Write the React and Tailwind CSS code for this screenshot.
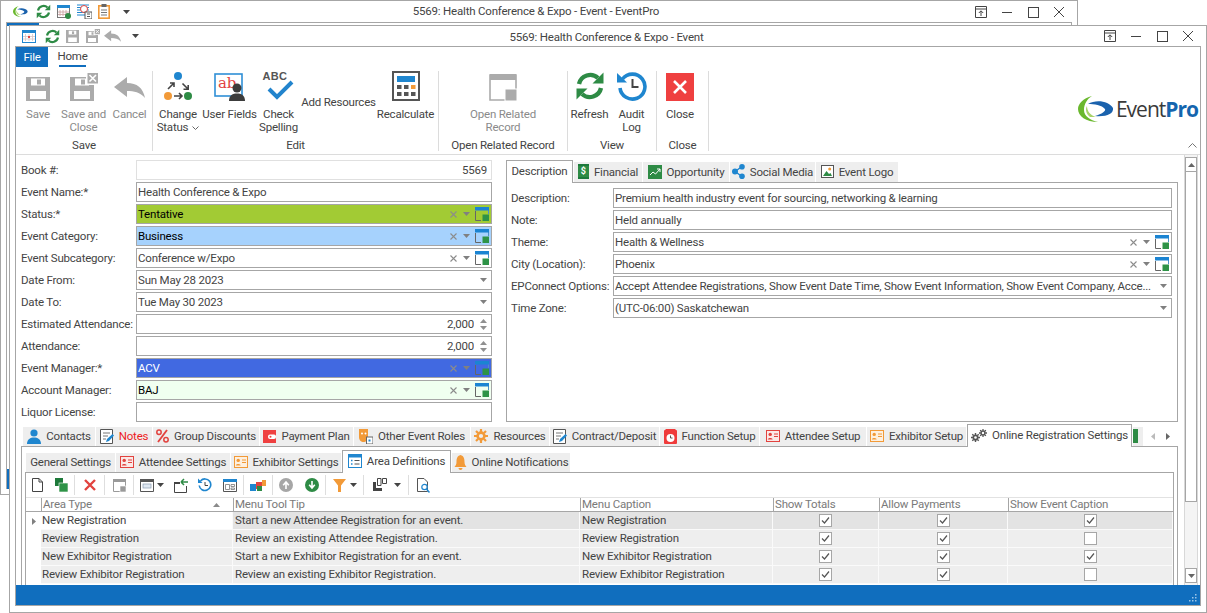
import React from "react";

function Svg({ w = 16, h = 16, vb, children, className = "" }) {
  return (
    <svg width={w} height={h} viewBox={vb || `0 0 ${w} ${h}`} className={`block shrink-0 ${className}`} fill="none">
      {children}
    </svg>
  );
}

const Caret = ({ c = "#7a7a7a", w = 7, up = false }) => (
  <Svg w={w} h={4} vb="0 0 7 4">
    <path d={up ? "M0 4 L3.5 0 L7 4Z" : "M0 0 L7 0 L3.5 4Z"} fill={c} />
  </Svg>
);

const RefreshIcon = ({ s = 16 }) => (
  <Svg w={s} h={s} vb="0 0 30 30">
    <path d="M4 13 A11.5 11.5 0 0 1 23 7" stroke="#2e8b45" strokeWidth="4.4" />
    <path d="M17.5 12.5 L28.5 12.5 L28.5 1.5Z" fill="#2e8b45" />
    <path d="M26 17 A11.5 11.5 0 0 1 7 23" stroke="#2e8b45" strokeWidth="4.4" />
    <path d="M12.5 17.5 L1.5 17.5 L1.5 28.5Z" fill="#2e8b45" />
  </Svg>
);

const Floppy = ({ x = false, c = "#ababab", w = 24, h = 24 }) => (
  <Svg w={w} h={h} vb={x ? "0 0 28 28" : "0 4 24 24"}>
    <path fillRule="evenodd" clipRule="evenodd" d="M0 4 H24 V28 H0Z M5 5.5 V12.5 H19 V5.5Z M4 18 V26 H20 V18Z" fill={c} />
    <rect x="11" y="6.5" width="4" height="5" fill={c} />
    {x && (
      <>
        <rect x="16" y="0" width="12" height="12" fill="#fff" />
        <rect x="17.5" y="0" width="10.5" height="10.5" fill={c} />
        <path d="M19.5 2 L26 8.5 M26 2 L19.5 8.5" stroke="#fff" strokeWidth="1.6" />
      </>
    )}
  </Svg>
);

const BackArrow = ({ w = 31, h = 21, c = "#ababab" }) => (
  <Svg w={w} h={h} vb="0 0 31 21">
    <path d="M0 10 L13 0 V6 C23 6 29 11 31 21 C26 15 20 14 13 14 V20Z" fill={c} />
  </Svg>
);

const RelatedIcon = ({ s = 14 }) => (
  <Svg w={s} h={s} vb="0 0 14 14">
    <path d="M13.5 .5 V7" stroke="#4d8fc6" />
    <rect x="0" y="0" width="14" height="3.5" fill="#1b84d2" />
    <path d="M.5 4 V13.5 H6" stroke="#666" strokeWidth="1" />
    <rect x="7.5" y="7.5" width="6.5" height="6.5" fill="#2e9347" />
  </Svg>
);

const SmallX = ({ c = "#8c8c8c" }) => (
  <Svg w={7} h={7}>
    <path d="M.5 .5 L6.5 6.5 M6.5 .5 L.5 6.5" stroke={c} strokeWidth="1.1" />
  </Svg>
);

const WinControls = () => (
  <div className="flex items-center gap-[12px] text-[#444]">
    <Svg w={14} h={14}>
      <path d="M1.5 1.5 H12.5 V12.5 H1.5Z M1.5 4 H12.5" stroke="#444" />
      <path d="M7 11 V6 M4.8 8 L7 5.8 L9.2 8" stroke="#444" />
    </Svg>
    <Svg w={14} h={14}><path d="M2 7.5 H12" stroke="#444" /></Svg>
    <Svg w={14} h={14}><rect x="2.5" y="2.5" width="10" height="10" stroke="#444" /></Svg>
    <Svg w={14} h={14}><path d="M2 2 L12 12 M12 2 L2 12" stroke="#444" /></Svg>
  </div>
);

const Swoosh = ({ w = 36, h = 26 }) => (
  <Svg w={w} h={h} vb="0 0 36 26">
    <path d="M14 0 C5 2 0 8 0 13 C0 20 8 26 20 26 C12 24 6 20 6 14 C6 8 9 3 14 0Z" fill="#6ab82e" />
    <path d="M10 8 C18 3 31 5 35 12 C36 18 28 21 17 20 C24 18 28 15 27 13 C24 9 16 8 10 8Z" fill="#1a62ad" />
    <path d="M12 21 C8 18 7 13 9 10 C9 15 12 19 18 21Z" fill="#a8d26a" />
  </Svg>
);

function RibbonBtn({ width, icon, label, muted }) {
  return (
    <div className={`flex flex-col items-center ${width} ${muted ? "text-[#8a8a8a]" : "text-[#444]"}`}>
      <div className="flex h-[30px] items-end justify-center">{icon}</div>
      <div className="mt-[7px] whitespace-nowrap text-center leading-[13px]">{label}</div>
    </div>
  );
}

function Group({ label, width, children }) {
  return (
    <div className={`flex h-[80px] flex-col border-r border-[#dcdcdc] ${width}`}>
      <div className="flex h-[69px] items-start">{children}</div>
      <div className="whitespace-nowrap text-center leading-[12px] text-[#444]">{label}</div>
    </div>
  );
}

const ChangeStatusIcon = () => (
  <Svg w={30} h={30}>
    <circle cx="15" cy="5" r="4" fill="#1f86cf" />
    <circle cx="5" cy="25" r="4" fill="#f29a38" />
    <circle cx="25" cy="25" r="4" fill="#2e8b45" />
    <path d="M5 18 L10.5 12.5 M7 12 H11 V16" stroke="#444" strokeWidth="1.6" />
    <path d="M25 18 L19.5 12.5 M20.5 18.2 H25.2 V14" stroke="#444" strokeWidth="1.6" />
    <path d="M11 25 H19 M16 22 L19 25 L16 28" stroke="#444" strokeWidth="1.6" />
  </Svg>
);

const UserFieldsIcon = () => (
  <Svg w={31} h={30}>
    <rect x="1" y="3" width="27" height="22" stroke="#2f8fd6" strokeWidth="1.6" fill="#fff" />
    <text x="4" y="17" fontSize="15" fontFamily="DejaVu Serif, serif" fill="#e2433f" fontWeight="500">ab</text>
    <circle cx="23" cy="17" r="4.5" fill="#3c3c3c" />
    <path d="M15 30 C15 24 19 22.5 23 22.5 C27 22.5 31 24 31 30Z" fill="#3c3c3c" />
  </Svg>
);

const SpellIcon = () => (
  <div className="relative flex h-[30px] w-[32px] flex-col">
    <span className="text-[11px] font-bold leading-[11px] tracking-[0.3px] text-[#555] [font-family:'Liberation_Sans',sans-serif]">ABC</span>
    <Svg w={30} h={20} className="absolute right-0 top-[9px]">
      <path d="M4 9 L12 17 L27 2" stroke="#2284cd" strokeWidth="4" />
    </Svg>
  </div>
);

const CalcIcon = () => (
  <Svg w={28} h={30}>
    <rect x="1" y="1" width="26" height="28" stroke="#555" strokeWidth="2" fill="#fff" />
    <rect x="5" y="5" width="18" height="6" fill="#1f86cf" />
    {[5, 12, 19].map((x) => <rect key={x} x={x} y="14" width="4.5" height="4" fill={x === 19 ? "#f29a38" : "#555"} />)}
    {[5, 12, 19].map((x) => <rect key={x} x={x} y="21" width="4.5" height="4" fill="#555" />)}
  </Svg>
);

const OpenRelatedIcon = () => (
  <Svg w={28} h={27}>
    <path d="M1 1 H27 V26 H1Z" stroke="#ababab" strokeWidth="1.6" fill="#fff" />
    <rect x="1" y="0" width="26" height="6" fill="#ababab" />
    <rect x="16" y="15" width="12" height="12" fill="#ababab" stroke="#fff" />
  </Svg>
);

const AuditIcon = () => (
  <Svg w={30} h={30}>
    <path d="M5.5 8 A12.5 12.5 0 1 1 3 17" stroke="#1f86cf" strokeWidth="3.6" />
    <path d="M0 2 V11.5 H10Z" fill="#1f86cf" />
    <path d="M15.5 8 V16 H21.5" stroke="#444" strokeWidth="2" />
  </Svg>
);

const CloseIcon = () => (
  <div className="flex h-[28px] w-[28px] items-center justify-center bg-[#ef4040]">
    <Svg w={16} h={16}>
      <path d="M2 2 L14 14 M14 2 L2 14" stroke="#fff" strokeWidth="2.6" />
    </Svg>
  </div>
);

function Field({ value, tone = "bg-white text-[#444]", border = "border-[#a6a6a6]", align = "", kind }) {
  return (
    <div className={`flex h-[20px] min-w-0 flex-1 items-center border pl-[1px] pr-[1px] ${border} ${tone}`}>
      <span className={`min-w-0 flex-1 truncate ${align}`}>{value}</span>
      {kind === "lookup" && (
        <div className="ml-[4px] flex items-center">
          <SmallX />
          <div className="ml-[6px]"><Caret c="#808080" /></div>
          <div className="ml-[5px] mr-[1px]"><RelatedIcon /></div>
        </div>
      )}
      {kind === "drop" && <div className="ml-[4px] mr-[3px]"><Caret c="#808080" /></div>}
      {kind === "spin" && (
        <div className="ml-[6px] mr-[3px] flex flex-col gap-[3px]">
          <Caret c="#909090" up />
          <Caret c="#909090" />
        </div>
      )}
    </div>
  );
}

function Row({ label, labelW = "w-[115px]", ...rest }) {
  return (
    <div className="flex h-[20px] items-center">
      <div className={`shrink-0 whitespace-nowrap text-[#444] ${labelW}`}>{label}</div>
      <Field {...rest} />
    </div>
  );
}

function Tab({ width, icon, label, active, red, h = "h-[19px]" }) {
  if (active) {
    return (
      <div className={`relative z-10 -mb-px flex h-[23px] shrink-0 items-center justify-center gap-[5px] border border-b-0 border-[#a6a6a6] bg-white pb-[2px] text-[#444] ${width}`}>
        {icon}
        <span className="whitespace-nowrap">{label}</span>
      </div>
    );
  }
  return (
    <div className={`flex shrink-0 items-center justify-center gap-[5px] bg-[#eeeeee] pb-px ${h} ${width} ${red ? "text-[#ed1c24]" : "text-[#444]"}`}>
      {icon}
      <span className="whitespace-nowrap">{label}</span>
    </div>
  );
}

/* tab icons */
const DocPen = () => (
  <Svg w={14} h={15}>
    <path d="M.5 .5 H12.5 V14.5 H.5Z" stroke="#555" fill="#fff" />
    <path d="M3 4 H10 M3 7 H8 M3 10 H6" stroke="#777" />
    <path d="M6 13 L7 10 L12.5 5 L14 6.5 L9 12Z" fill="#1f86cf" />
  </Svg>
);
const Person = () => (
  <Svg w={14} h={15}>
    <circle cx="7" cy="4" r="3.6" fill="#1f86cf" />
    <path d="M0 15 C0 10 3.5 8.5 7 8.5 C10.5 8.5 14 10 14 15Z" fill="#1f86cf" />
  </Svg>
);
const Percent = () => (
  <Svg w={13} h={14}>
    <circle cx="3" cy="3.2" r="2.2" stroke="#e2433f" strokeWidth="1.5" />
    <circle cx="10" cy="10.8" r="2.2" stroke="#e2433f" strokeWidth="1.5" />
    <path d="M11 1 L2 13" stroke="#e2433f" strokeWidth="1.8" />
  </Svg>
);
const Payment = () => (
  <Svg w={13} h={13}>
    <rect width="13" height="13" fill="#ef4040" />
    <rect x="5" y="4.5" width="8" height="4.5" rx="2" fill="#fff" />
    <circle cx="7.5" cy="6.7" r="1" fill="#ef4040" />
  </Svg>
);
const Masks = () => (
  <Svg w={14} h={15}>
    <path d="M0 0 H9 V8 C9 11 7 13 4.5 13 C2 13 0 11 0 8Z" fill="#f29a38" />
    <circle cx="3" cy="4.5" r="1" fill="#fff" />
    <circle cx="6.5" cy="4.5" r="1" fill="#fff" />
    <rect x="7.5" y="8" width="6.5" height="7" fill="#fff" stroke="#666" />
    <rect x="9.5" y="10.5" width="2" height="2" fill="#1f86cf" />
  </Svg>
);
const Gear = ({ c = "#f29a38", s = 14 }) => (
  <Svg w={s} h={s} vb="0 0 14 14">
    <circle cx="7" cy="7" r="3.4" stroke={c} strokeWidth="2.6" />
    <path d="M7 0 V3 M7 11 V14 M0 7 H3 M11 7 H14 M2 2 L4 4 M10 10 L12 12 M12 2 L10 4 M4 10 L2 12" stroke={c} strokeWidth="2.2" />
  </Svg>
);
const FuncIcon = () => (
  <Svg w={13} h={15}>
    <rect y="1" width="13" height="14" rx="1" fill="#ef3b3b" />
    <rect x="1.5" y="0" width="10" height="2" fill="#ef3b3b" />
    <circle cx="6.5" cy="9" r="4" fill="#fff" />
    <path d="M6.5 6.5 V9 H8.5" stroke="#555" />
  </Svg>
);
const IdCard = ({ c = "#e2433f", bg = "#fbe9e7" }) => (
  <Svg w={14} h={12}>
    <rect x=".5" y=".5" width="13" height="11" stroke={c} fill={bg} />
    <circle cx="4.2" cy="4.4" r="1.7" fill={c} />
    <path d="M1.8 9.5 C1.8 7.5 6.6 7.5 6.6 9.5Z" fill={c} />
    <path d="M8 4 H12 M8 6.5 H12" stroke={c} />
  </Svg>
);
const Gears = () => (
  <div className="flex items-start">
    <div className="mt-[4px]"><Gear c="#555" s={9} /></div>
    <div className="-ml-[1px]"><Gear c="#555" s={8} /></div>
  </div>
);
const AreaDef = () => (
  <Svg w={14} h={14}>
    <rect x=".5" y=".5" width="13" height="13" stroke="#1f86cf" fill="#fff" />
    <rect width="14" height="3.5" fill="#1f86cf" />
    <path d="M3 6.5 H4.5 M3 10 H4.5" stroke="#1f86cf" strokeWidth="1.5" />
    <path d="M6.5 6.5 H11.5 M6.5 10 H11.5" stroke="#555" />
  </Svg>
);
const Bell = () => (
  <Svg w={13} h={15}>
    <path d="M6.5 0 C3 1 2.5 4 2.5 7 C2.5 9.5 1.5 10.5 .5 12 H12.5 C11.5 10.5 10.5 9.5 10.5 7 C10.5 4 10 1 6.5 0Z" fill="#f29a38" />
    <path d="M4.5 13 H8.5 C8.5 15.5 4.5 15.5 4.5 13Z" fill="#f29a38" />
  </Svg>
);
const Money = () => (
  <div className="flex h-[15px] w-[11px] items-center justify-center border-y-[2px] border-[#1d7a3c] bg-[#2e8b45] text-[9px] font-bold leading-none tracking-normal text-white">$</div>
);
const Opportunity = () => (
  <Svg w={14} h={14}>
    <rect width="14" height="14" fill="#2e8b45" />
    <path d="M2 10 L5 7 L7.5 9 L12 4 M9 4 H12 V7" stroke="#fff" />
  </Svg>
);
const Share = () => (
  <Svg w={13} h={15}>
    <path d="M3 7.5 L10 2.5 M3 7.5 L10 12.5" stroke="#1f86cf" strokeWidth="1.5" />
    <circle cx="3" cy="7.5" r="3" fill="#1f86cf" />
    <circle cx="10" cy="2.8" r="2.8" fill="#1f86cf" />
    <circle cx="10" cy="12.2" r="2.8" fill="#1f86cf" />
  </Svg>
);
const Picture = () => (
  <Svg w={13} h={13}>
    <rect x=".5" y=".5" width="12" height="12" stroke="#555" fill="#fff" />
    <circle cx="8.7" cy="4" r="1.5" fill="#f29a38" />
    <path d="M2 11 L5.5 6 L8 9 L9.5 8 L11 11Z" fill="#2e8b45" />
  </Svg>
);

/* toolbar icons */
const TBtn = ({ width, children }) => (
  <div className={`flex h-[24px] shrink-0 items-center justify-center ${width}`}>{children}</div>
);
const TSep = () => <div className="my-[2px] h-[20px] w-px shrink-0 bg-[#dedede]" />;
const WinGray = ({ w = 13, h = 13 }) => (
  <Svg w={w} h={h} vb="0 0 13 13">
    <path d="M.5 .5 H12.5 V12.5 H.5Z" stroke="#9a9a9a" fill="#fff" />
    <rect width="13" height="3" fill="#9a9a9a" />
    <rect x="7" y="7" width="6" height="6" fill="#9a9a9a" stroke="#fff" strokeWidth=".6" />
  </Svg>
);

function Toolbar() {
  return (
    <div className="flex h-[24px] shrink-0 items-center">
      <TBtn width="w-[22px]">
        <Svg w={11} h={14}><path d="M.5 .5 H7 L10.5 4 V13.5 H.5Z M7 .5 V4 H10.5" stroke="#444" fill="#fff" /></Svg>
      </TBtn>
      <TBtn width="w-[26px]">
        <Svg w={13} h={14}><rect width="8" height="8" fill="#1e7a3a" /><rect x="4" y="5" width="9" height="9" fill="#2e9347" stroke="#fff" strokeWidth=".6" /></Svg>
      </TBtn>
      <TSep />
      <TBtn width="w-[29px]">
        <Svg w={12} h={12}><path d="M1 1 L11 11 M11 1 L1 11" stroke="#e2433f" strokeWidth="2.4" /></Svg>
      </TBtn>
      <TSep />
      <TBtn width="w-[28px]"><WinGray /></TBtn>
      <TSep />
      <TBtn width="w-[36px]">
        <div className="flex items-center gap-[3px]">
          <Svg w={14} h={13}>
            <path d="M.5 .5 H13.5 V12.5 H.5Z" stroke="#555" fill="#fff" />
            <rect width="14" height="3" fill="#555" />
            <rect x="3" y="5" width="8" height="4" stroke="#8a9bb0" fill="#dfe8f2" strokeWidth=".7" />
          </Svg>
          <Caret c="#444" />
        </div>
      </TBtn>
      <TBtn width="w-[22px]">
        <Svg w={15} h={15}>
          <path d="M.5 5.5 V14.5 H12.5 V8" stroke="#444" fill="#fff" />
          <path d="M0 5 H6" stroke="#444" strokeWidth="2" />
          <path d="M7 4 H14 M7 4 L10 1 M7 4 L10 7" stroke="#2e8b45" strokeWidth="1.5" />
        </Svg>
      </TBtn>
      <TBtn width="w-[25px]">
        <Svg w={14} h={14}>
          <path d="M2.5 3 A5.8 5.8 0 1 1 1.2 7.5" stroke="#1f86cf" strokeWidth="1.6" />
          <path d="M0 .5 V5 H4.5Z" fill="#1f86cf" />
          <path d="M7 4 V7.5 H10" stroke="#444" />
        </Svg>
      </TBtn>
      <TBtn width="w-[26px]">
        <Svg w={14} h={13}>
          <path d="M.5 .5 H13.5 V12.5 H.5Z" stroke="#555" fill="#fff" />
          <rect width="14" height="3" fill="#1f86cf" />
          <path d="M2.5 5.5 H6.5 V10.5 H2.5Z M8 5.5 H11.5 V7.5 H8Z M8 9 H11.5 V10.5 H8Z" stroke="#777" strokeWidth=".8" />
        </Svg>
      </TBtn>
      <TSep />
      <TBtn width="w-[28px]">
        <Svg w={16} h={11}>
          <rect x="0" y="4" width="6" height="7" fill="#1f86cf" />
          <rect x="6" y="2" width="6" height="7" fill="#e2433f" />
          <rect x="7" y="6" width="5" height="5" fill="#2e8b45" />
          <rect x="12" y="0" width="4" height="6" fill="#f29a38" />
        </Svg>
      </TBtn>
      <TSep />
      <TBtn width="w-[26px]">
        <Svg w={14} h={14}><circle cx="7" cy="7" r="7" fill="#a6a6a6" /><path d="M7 11 V5 M4.2 7.2 L7 4 L9.8 7.2" stroke="#fff" strokeWidth="1.6" /></Svg>
      </TBtn>
      <TBtn width="w-[26px]">
        <Svg w={14} h={14}><circle cx="7" cy="7" r="7" fill="#2e8b45" /><path d="M7 3 V9 M4.2 6.8 L7 10 L9.8 6.8" stroke="#fff" strokeWidth="1.6" /></Svg>
      </TBtn>
      <TSep />
      <TBtn width="w-[37px]">
        <div className="flex items-center gap-[4px]">
          <Svg w={13} h={13}><path d="M0 0 H13 L8 6.5 V13 H5 V6.5Z" fill="#f29a38" /></Svg>
          <Caret c="#444" />
        </div>
      </TBtn>
      <TSep />
      <TBtn width="w-[44px]">
        <div className="flex items-center gap-[7px]">
          <Svg w={15} h={14}>
            <path d="M1 4 V13 H10 V10 H4 V4Z" fill="#444" />
            <path d="M5.5 .5 H9 V7.5 H5.5Z M10.5 .5 H14.5 V5.5 H10.5Z" stroke="#444" />
          </Svg>
          <Caret c="#444" />
        </div>
      </TBtn>
      <TSep />
      <TBtn width="w-[28px]">
        <Svg w={13} h={15}>
          <path d="M.5 .5 H7 L10.5 4 V13.5 H.5Z" stroke="#555" fill="#fff" />
          <circle cx="7.5" cy="9" r="2.7" stroke="#1f86cf" strokeWidth="1.2" fill="#fff" />
          <path d="M9.5 11 L12.5 14.5" stroke="#1f86cf" strokeWidth="1.5" />
        </Svg>
      </TBtn>
    </div>
  );
}

const Check = ({ on }) => (
  <div className="flex h-[13px] w-[13px] items-center justify-center border border-[#a6a6a6] bg-white">
    {on && (
      <Svg w={9} h={9}>
        <path d="M1 4.5 L3.5 7 L8 1.5" stroke="#555" strokeWidth="1.2" />
      </Svg>
    )}
  </div>
);

const COLS = "grid grid-cols-[15px_192px_347px_193px_106px_129px_1fr]";
const GRID_ROWS = [
  ["New Registration", "Start a new Attendee Registration for an event.", "New Registration", true, true, true],
  ["Review Registration", "Review an existing Attendee Registration.", "Review Registration", true, true, false],
  ["New Exhibitor Registration", "Start a new Exhibitor Registration for an event.", "New Exhibitor Registration", true, true, true],
  ["Review Exhibitor Registration", "Review an existing Exhibitor Registration.", "Review Exhibitor Registration", true, true, false],
];

function DataGrid() {
  const head = ["Area Type", "Menu Tool Tip", "Menu Caption", "Show Totals", "Allow Payments", "Show Event Caption"];
  return (
    <div>
      <div className={`${COLS} h-[15px] border-y border-y-[#e2e2e2] border-b-[#a6a6a6] leading-[13px] text-[#7a7a7a]`}>
        <div />
        {head.map((t, i) => (
          <div key={t} className={`flex items-center justify-between border-l border-[#a6a6a6] pl-[1px] ${i === 0 ? "pr-[12px]" : ""}`}>
            <span>{t}</span>
            {i === 0 && <Caret c="#8a8a8a" w={9} up />}
          </div>
        ))}
      </div>
      {GRID_ROWS.map((r, i) => {
        const sel = i === 0;
        const bg = sel ? "bg-[#e3e3e3]" : "bg-[#eeeeee]";
        return (
          <div key={r[0]} className={`${COLS} h-[18px] leading-[17px] text-[#444]`}>
            <div className="flex items-center justify-center bg-white">
              {sel && (
                <Svg w={4} h={7}><path d="M0 0 L4 3.5 L0 7Z" fill="#808080" /></Svg>
              )}
            </div>
            <div className={`border-b border-r border-[#fafafa] pl-[1px] ${sel ? "bg-white" : bg}`}>{r[0]}</div>
            <div className={`border-b border-r border-[#fafafa] pl-[2px] ${bg}`}>{r[1]}</div>
            <div className={`border-b border-r border-[#fafafa] pl-[2px] ${bg}`}>{r[2]}</div>
            {[3, 4, 5].map((k) => (
              <div key={k} className={`flex items-center justify-center border-b border-r border-[#fafafa] ${bg}`}>
                <Check on={r[k]} />
              </div>
            ))}
          </div>
        );
      })}
    </div>
  );
}

function Scrollbar() {
  return (
    <div className="flex w-[14px] shrink-0 flex-col border-x border-[#d8d8d8] bg-[#f4f4f4]">
      <div className="mt-[2px] flex h-[15px] items-center justify-center border border-[#a6a6a6] bg-white"><Caret c="#666" up /></div>
      <div className="h-[330px] border-x border-b border-[#a6a6a6] bg-white" />
      <div className="flex-1" />
      <div className="mb-[2px] flex h-[15px] items-center justify-center border border-[#a6a6a6] bg-white"><Caret c="#666" /></div>
    </div>
  );
}

export default function App() {
  return (
    <div className="relative h-[613px] w-[1207px] overflow-hidden bg-white text-[11.5px] leading-[16px] tracking-[-0.2px] [font-family:Roboto,sans-serif]">
      {/* Window behind */}
      <div className="absolute left-0 top-0 flex h-[495px] w-[1078px] flex-col border border-[#a6a6a6] bg-white">
        <div className="flex h-[21px] shrink-0 items-center pl-[12px] pr-[11px]">
          <Swoosh w={15} h={11} />
          <div className="ml-[8px]"><RefreshIcon s={15} /></div>
          <Svg w={14} h={14} className="ml-[6px]">
            <rect x=".5" y=".5" width="12" height="12" stroke="#777" fill="#fff" />
            <rect width="13" height="3" fill="#1f86cf" />
            <path d="M3 5 V11 M6 5 V11 M9 5 V11 M1 7 H12 M1 9.5 H12" stroke="#c9a0a0" strokeWidth=".8" />
            <circle cx="11" cy="11" r="3" fill="#2e8b45" />
          </Svg>
          <Svg w={15} h={15} className="ml-[6px]">
            <path d="M0 1 H12 M0 3.5 H12 M0 6 H12 M0 8.5 H12 M0 11 H8" stroke="#1f86cf" />
            <circle cx="7" cy="5" r="3.5" stroke="#e2433f" fill="#fff" />
            <rect x="8" y="8" width="7" height="7" fill="#fff" stroke="#555" />
            <path d="M10 10 H13 M10 12.5 H13" stroke="#555" />
          </Svg>
          <Svg w={12} h={15} className="ml-[6px]">
            <rect x=".8" y="1.8" width="10.4" height="12.4" stroke="#f29a38" strokeWidth="1.6" fill="#fff" />
            <rect x="3.5" y="0" width="5" height="3" fill="#666" />
            <path d="M3 6 H9 M3 8.5 H9 M3 11 H9" stroke="#777" />
          </Svg>
          <div className="ml-[13px]"><Caret c="#444" /></div>
          <div className="flex-1 pb-[2px] pr-[32px] text-center text-[#444]">5569: Health Conference &amp; Expo - Event - EventPro</div>
          <WinControls />
        </div>
        <div className="mx-[5px] mb-[5px] flex flex-1 flex-col justify-between border-x border-t border-[#a6a6a6]">
          <div className="h-[3px] w-[32px] bg-[#106ebe]" />
          <div className="h-[20px] w-full bg-[#106ebe]" />
        </div>
      </div>

      {/* Window in front */}
      <div className="absolute left-[9px] top-[25px] flex h-[588px] w-[1198px] flex-col border border-[#a6a6a6] bg-white">
        <div className="flex h-[20px] shrink-0 items-center pl-[12px] pr-[11px]">
          <Svg w={14} h={13}>
            <rect x=".5" y=".5" width="13" height="12" stroke="#1f86cf" fill="#fff" />
            <rect width="14" height="3" fill="#1f86cf" />
            <path d="M3.5 4 V11 M7 4 V11 M10.5 4 V11 M1 6.5 H13 M1 9 H13" stroke="#d5c5c5" strokeWidth=".8" />
            <rect x="6" y="6" width="2" height="2" fill="#e2433f" />
          </Svg>
          <div className="ml-[9px]"><RefreshIcon s={15} /></div>
          <div className="ml-[6px]"><Floppy w={13} h={13} /></div>
          <div className="ml-[7px]"><Floppy x w={14} h={14} /></div>
          <div className="ml-[4px]"><BackArrow w={17} h={12} /></div>
          <div className="ml-[11px]"><Caret c="#444" /></div>
          <div className="flex-1 pr-[29px] pt-[1px] text-center text-[#444]">5569: Health Conference &amp; Expo - Event</div>
          <WinControls />
        </div>
        <div className="mx-[5px] mb-[6px] flex min-h-0 flex-1 flex-col border border-[#a6a6a6]">
          {/* ribbon tabs */}
          <div className="flex h-[20px] shrink-0 items-stretch">
            <div className="flex w-[32px] items-center justify-center bg-[#106ebe] text-white">File</div>
            <div className="ml-[11px] flex w-[27px] items-center justify-center border-b-[2px] border-[#106ebe] text-[#444]">Home</div>
          </div>
          {/* ribbon */}
          <div className="flex h-[88px] shrink-0 border-b border-[#dcdcdc] pt-[4px]">
            <Group label="Save" width="w-[137px]">
              <RibbonBtn width="w-[44px]" muted icon={<Floppy />} label="Save" />
              <RibbonBtn width="w-[47px]" muted icon={<Floppy x w={28} h={28} />} label={<>Save and<br />Close</>} />
              <RibbonBtn width="w-[45px]" muted icon={<div className="mb-[3px]"><BackArrow /></div>} label="Cancel" />
            </Group>
            <Group label="Edit" width="w-[286px]">
              <RibbonBtn width="w-[50px]" icon={<ChangeStatusIcon />} label={<>Change<br /><span className="inline-flex items-center gap-[4px]">Status <Svg w={7} h={4}><path d="M.5 .5 L3.5 3.5 L6.5 .5" stroke="#666" /></Svg></span></>} />
              <RibbonBtn width="w-[53px]" icon={<UserFieldsIcon />} label="User Fields" />
              <RibbonBtn width="w-[45px]" icon={<SpellIcon />} label={<>Check<br />Spelling</>} />
              <div className="flex h-[68px] w-[75px] justify-center whitespace-nowrap pt-[23px] text-[#444]">Add Resources</div>
              <RibbonBtn width="w-[59px]" icon={<CalcIcon />} label="Recalculate" />
            </Group>
            <Group label="Open Related Record" width="w-[129px]">
              <RibbonBtn width="w-[128px]" muted icon={<OpenRelatedIcon />} label={<>Open Related<br />Record</>} />
            </Group>
            <Group label="View" width="w-[89px]">
              <RibbonBtn width="w-[43px]" icon={<RefreshIcon s={30} />} label="Refresh" />
              <RibbonBtn width="w-[41px]" icon={<AuditIcon />} label={<>Audit<br />Log</>} />
            </Group>
            <Group label="Close" width="w-[52px]">
              <RibbonBtn width="w-[46px]" icon={<CloseIcon />} label="Close" />
            </Group>
            <div className="flex flex-1 flex-col items-end pr-[2px]">
              <div className="mt-[25px] flex items-center">
                <Swoosh />
                <span className="ml-[2px] text-[21px] leading-[24px] tracking-[-1px] text-[#3a3a3a] [font-family:'Open_Sans',sans-serif]">Event<span className="font-bold text-[#1565ae]">Pro</span></span>
              </div>
              <div className="mr-[1px] mt-[21px]">
                <Svg w={9} h={5}><path d="M.5 4.5 L4.5 .5 L8.5 4.5" stroke="#777" /></Svg>
              </div>
            </div>
          </div>

          {/* body */}
          <div className="flex min-h-0 flex-1">
            <div className="flex min-w-0 flex-1 flex-col pt-[5px]">
              <div className="flex shrink-0">
                {/* left form */}
                <div className="ml-[5px] flex w-[471px] flex-col gap-[2px]">
                  <Row label="Book #:" value="5569" align="text-right pr-[3px]" border="border-[#e0e0e0]" />
                  <Row label="Event Name:*" value="Health Conference & Expo" />
                  <Row label="Status:*" value="Tentative" kind="lookup" tone="bg-[#a2cb34] text-black" />
                  <Row label="Event Category:" value="Business" kind="lookup" tone="bg-[#a6d2fd] text-black" />
                  <Row label="Event Subcategory:" value="Conference w/Expo" kind="lookup" />
                  <Row label="Date From:" value="Sun May 28 2023" kind="drop" />
                  <Row label="Date To:" value="Tue May 30 2023" kind="drop" />
                  <Row label="Estimated Attendance:" value="2,000" kind="spin" align="text-right" />
                  <Row label="Attendance:" value="2,000" kind="spin" align="text-right" />
                  <Row label="Event Manager:*" value="ACV" kind="lookup" tone="bg-[#4169e1] text-white" />
                  <Row label="Account Manager:" value="BAJ" kind="lookup" tone="bg-[#f0fff0] text-black" />
                  <Row label="Liquor License:" value="" />
                </div>
                {/* right panel */}
                <div className="ml-[14px] flex w-[672px] flex-col">
                  <div className="flex h-[22px] items-end gap-px">
                    <Tab active width="w-[67px]" label="Description" />
                    <Tab width="w-[68px]" h="h-[20px]" icon={<Money />} label="Financial" />
                    <Tab width="w-[86px]" h="h-[20px]" icon={<Opportunity />} label="Opportunity" />
                    <Tab width="w-[85px]" h="h-[20px]" icon={<Share />} label="Social Media" />
                    <Tab width="w-[82px]" h="h-[20px]" icon={<Picture />} label="Event Logo" />
                  </div>
                  <div className="flex h-[240px] flex-col gap-[2px] border border-[#a6a6a6] pl-[4px] pr-[5px] pt-[5px]">
                    <Row labelW="w-[102px]" label="Description:" value="Premium health industry event for sourcing, networking & learning" />
                    <Row labelW="w-[102px]" label="Note:" value="Held annually" />
                    <Row labelW="w-[102px]" label="Theme:" value="Health & Wellness" kind="lookup" />
                    <Row labelW="w-[102px]" label="City (Location):" value="Phoenix" kind="lookup" />
                    <Row labelW="w-[102px]" label="EPConnect Options:" value="Accept Attendee Registrations, Show Event Date Time, Show Event Information, Show Event Company, Acce..." kind="drop" />
                    <Row labelW="w-[102px]" label="Time Zone:" value="(UTC-06:00) Saskatchewan" kind="drop" />
                  </div>
                </div>
              </div>

              {/* bottom tabs */}
              <div className="relative ml-[5px] mt-[2px] flex h-[22px] w-[1157px] shrink-0 items-end gap-px pl-[2px]">
                <Tab width="w-[72px]" icon={<Person />} label="Contacts" />
                <Tab width="w-[56px]" icon={<DocPen />} label="Notes" red />
                <Tab width="w-[106px]" icon={<Percent />} label="Group Discounts" />
                <Tab width="w-[93px]" icon={<Payment />} label="Payment Plan" />
                <Tab width="w-[116px]" icon={<Masks />} label="Other Event Roles" />
                <Tab width="w-[78px]" icon={<Gear />} label="Resources" />
                <Tab width="w-[109px]" icon={<DocPen />} label="Contract/Deposit" />
                <Tab width="w-[99px]" icon={<FuncIcon />} label="Function Setup" />
                <Tab width="w-[106px]" icon={<IdCard />} label="Attendee Setup" />
                <Tab width="w-[99px]" icon={<IdCard c="#f29a38" bg="#fdf0e0" />} label="Exhibitor Setup" />
                <Tab active width="w-[165px]" icon={<Gears />} label="Online Registration Settings" />
                <div className="flex h-[19px] w-[10px] shrink-0 items-center bg-[#eeeeee] pb-[1px]"><div className="h-[14px] w-[5px] bg-[#2e8b45]" /></div>
                <div className="flex h-[19px] items-center gap-[11px] pl-[7px]">
                  <Svg w={4} h={7}><path d="M4 0 L0 3.5 L4 7Z" fill="#bbb" /></Svg>
                  <Svg w={4} h={7}><path d="M0 0 L4 3.5 L0 7Z" fill="#666" /></Svg>
                </div>
              </div>

              {/* bottom panel */}
              <div className="ml-[5px] flex min-h-0 w-[1157px] flex-1 flex-col border-x border-t border-[#a6a6a6] px-[3px] pt-[4px]">
                <div className="flex h-[21px] shrink-0 items-end gap-px pl-[1px]">
                  <Tab width="w-[89px]" label="General Settings" />
                  <Tab width="w-[114px]" icon={<IdCard />} label="Attendee Settings" />
                  <Tab width="w-[110px]" icon={<IdCard c="#f29a38" bg="#fdf0e0" />} label="Exhibitor Settings" />
                  <Tab active width="w-[109px]" icon={<AreaDef />} label="Area Definitions" />
                  <Tab width="w-[118px]" icon={<Bell />} label="Online Notifications" />
                </div>
                <div className="min-h-0 flex-1 overflow-hidden border-x border-t border-[#a6a6a6]">
                  <Toolbar />
                  <DataGrid />
                </div>
              </div>
            </div>
            <Scrollbar />
            <div className="w-[2px] shrink-0" />
          </div>

          {/* status bar */}
          <div className="flex h-[20px] shrink-0 items-end justify-end bg-[#106ebe] p-[3px]">
            <Svg w={10} h={10}>
              {[[8, 2], [5, 5], [8, 5], [2, 8], [5, 8], [8, 8]].map(([x, y]) => (
                <rect key={`${x}${y}`} x={x} y={y} width="1.5" height="1.5" fill="#9cc4e6" />
              ))}
            </Svg>
          </div>
        </div>
      </div>
    </div>
  );
}
